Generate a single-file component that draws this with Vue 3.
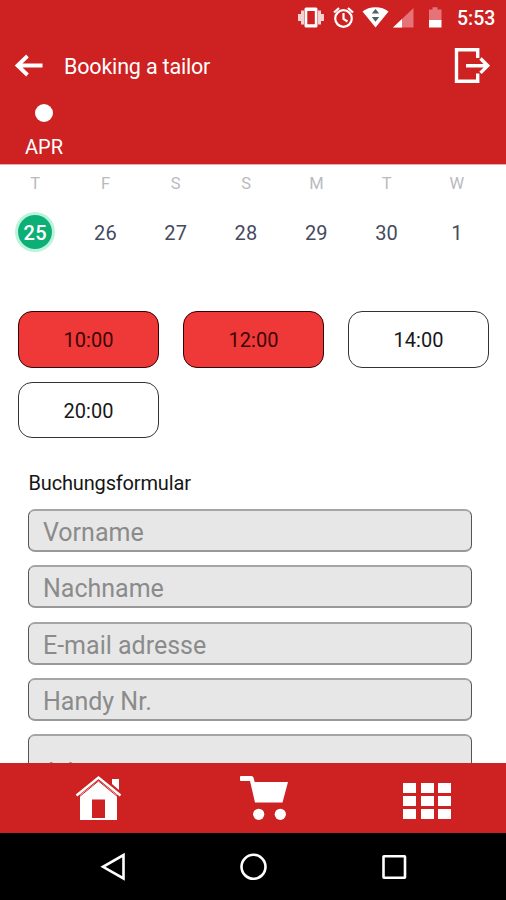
<script setup>
const days = [
  { letter: 'T', date: 25, selected: true },
  { letter: 'F', date: 26 },
  { letter: 'S', date: 27 },
  { letter: 'S', date: 28 },
  { letter: 'M', date: 29 },
  { letter: 'T', date: 30 },
  { letter: 'W', date: 1 },
]
const slots = [
  { time: '10:00', taken: true },
  { time: '12:00', taken: true },
  { time: '14:00', taken: false },
  { time: '20:00', taken: false },
]
const fields = ['Vorname', 'Nachname', 'E-mail adresse', 'Handy Nr.']
</script>

<template>
  <div class="screen">
    <header class="top">
      <div class="status">
        <svg class="status-icons" width="150" height="36" viewBox="294 0 150 36">
          <g fill="#fff">
            <path fill-rule="evenodd" d="M306 7.500h10q1.500 0 1.500 1.500v17q0 1.500-1.500 1.500h-10q-1.500 0-1.500-1.500v-17q0-1.500 1.500-1.500zM307.300 11v13.200h7.500v-13.200z" />
            <path d="M301 10.500h3v14h-3zM298 14h3v7h-3zM318 10.500h3v14h-3zM321 14h3v7h-3z" opacity=".8" />
            <path d="M362.500 11.500C369 5.800 382 5.800 388.500 11.500L375.500 27.500z" />
          </g>
          <path d="M371.800 13.500l3.700-4.500 3.700 4.500zM371.800 17h7.400l-3.700 4.800z" fill="#52605f" />
          <g fill="none" stroke="#fff" stroke-width="2.200">
            <circle cx="343.500" cy="18.500" r="8.300" />
            <path d="M343.500 13v6l4 2.500M334 12.500l5-4.500M353 12.500l-5-4.500" />
          </g>
          <path d="M393 27.500L413.500 8v19.500z" fill="#e57377" />
          <path d="M393 27.500L402 19v8.500z" fill="#fff" />
          <path d="M429 9.500h3.500v-2.200h5v2.200h4v11h-12.500z" fill="#e57377" />
          <path d="M429 20h12.500v7.500h-12.500z" fill="#fff" />
        </svg>
        <span class="clock">5:53</span>
      </div>
      <div class="bar">
        <svg class="back" width="30" height="24" viewBox="14 54 30 24" fill="none" stroke="#fff" stroke-width="3.800">
          <path d="M42.500 65.500H17.500M27.500 56l-10 9.500 10 9.500" />
        </svg>
        <h1>Booking a tailor</h1>
        <svg width="36" height="38" viewBox="454 47 36 38" fill="none" stroke="#fff" stroke-width="3.400">
          <path d="M477.700 58v-8.300h-21.200v31.600h21.200V73.500M466 65.700h21M480.500 58.500l7.200 7.200-7.200 7.200" />
        </svg>
      </div>
      <div class="month">
        <i class="dot"></i>
        <span>APR</span>
      </div>
    </header>

    <main class="content">
      <section class="week">
        <div v-for="(day, i) in days" :key="i" class="day">
          <span class="letter">{{ day.letter }}</span>
          <span class="date" :class="{ selected: day.selected }">{{ day.date }}</span>
        </div>
      </section>
      <section class="slots">
        <button v-for="slot in slots" :key="slot.time" class="slot" :class="{ taken: slot.taken }">{{ slot.time }}</button>
      </section>
      <section class="form">
        <h2>Buchungsformular</h2>
        <div v-for="field in fields" :key="field" class="field">{{ field }}</div>
        <div class="field address">Adresse</div>
      </section>
    </main>

    <nav class="tabs">
      <svg width="48" height="46" viewBox="75 775 48 46">
        <path d="M112 779h7v11l-7-6z" fill="#fff" />
        <path d="M80 795L98.500 780.500 117 795V820H80z" fill="#fff" />
        <path d="M76.500 795.500L98.500 777.500 120.500 795.500" fill="none" stroke="#fff" stroke-width="2.400" />
        <path d="M79 797L98.500 781 118 797" fill="none" stroke="#cd2122" stroke-width="1" />
        <path d="M92 799.500h13V818H92z" fill="#cd2122" />
      </svg>
      <svg width="50" height="46" viewBox="238 775 50 46" fill="#fff">
        <path d="M241 776h10.500q1.500 0 2 1.500l1.200 4.500h33.300l-5.500 20.500h-27.500l-5-21.500h-9q-1 0-1-1v-3q0-1 1-1z" />
        <circle cx="258.700" cy="814.300" r="5.600" />
        <circle cx="280.300" cy="814.300" r="5.600" />
      </svg>
      <div class="grid"><i v-for="n in 9" :key="n"></i></div>
    </nav>
    <footer class="system">
      <svg width="28" height="30" viewBox="100 852 28 30" fill="none" stroke="#fff" stroke-width="2.600">
        <path d="M123.500 855v23.500L103 866.800z" />
      </svg>
      <svg width="30" height="30" viewBox="239 852 30 30" fill="none" stroke="#fff" stroke-width="2.600">
        <circle cx="253.500" cy="866.800" r="12" />
      </svg>
      <svg width="28" height="30" viewBox="380 852 28 30" fill="none" stroke="#fff" stroke-width="2.600">
        <rect x="383.500" y="856.200" width="21.500" height="21.500" rx=".5" />
      </svg>
    </footer>
  </div>
</template>

<style>
body { margin: 0; background: #fff; }
</style>

<style scoped>
* { box-sizing: border-box; }
svg { display: block; flex: none; }
.screen { width: 506px; height: 900px; display: flex; flex-direction: column; overflow: hidden; background: #fff; font-family: Roboto, sans-serif; }
.top { flex: none; height: 165px; background: #cd2122; color: #fff; border-bottom: 1px solid #f0a9a9; }
.status { height: 36px; display: flex; align-items: center; padding-left: 294px; }
.clock { margin-left: 13px; font-size: 19.500px; font-weight: 500; }
.bar { height: 60px; display: flex; align-items: center; padding: 0 16px 0 14px; }
h1 { flex: 1; margin: 0 0 0 20px; font-size: 21.500px; font-weight: 400; letter-spacing: -.18px; }
.month { width: 88px; padding-top: 8px; display: flex; flex-direction: column; align-items: center; font-size: 20px; }
.dot { width: 18px; height: 18px; border-radius: 50%; background: #fff; }
.month span { margin-top: 13px; line-height: 24px; }
.content { flex: 1; min-height: 0; overflow: hidden; }
.week { display: grid; grid-template-columns: repeat(7, 70.300px); height: 146px; padding-top: 8px; }
.day { display: flex; flex-direction: column; align-items: center; }
.letter { font-size: 16.500px; line-height: 22px; color: #b9babd; }
.date { width: 34px; height: 34px; margin-top: 20px; border-radius: 50%; font-size: 20px; line-height: 36px; text-align: center; letter-spacing: .2px; color: #464a5c; }
.selected { background: #0caf75; box-shadow: 0 0 0 3px #bdf3dd; color: #fff; font-weight: 500; }
.slots { display: grid; grid-template-columns: repeat(3, 141px); gap: 14px 24px; padding-left: 18px; }
.slot { height: 56.500px; padding: 2px 0 0; border: 1px solid #333; border-radius: 14px; background: #fff; color: #181818; font: 400 20px Roboto, sans-serif; }
.taken { background: #ef3939; border-color: #300; color: #3c0505; }
.form { padding: 33px 34px 0 28px; }
h2 { margin: 0 0 14px .5px; font-size: 20px; line-height: 24px; font-weight: 400; letter-spacing: -.16px; color: #151515; }
.field { height: 43px; margin-bottom: 13.300px; padding-left: 14px; border: 1px solid #555; border-top: 2px solid #a5a5a5; border-bottom: 2px solid #999; border-radius: 7px; background: #e7e7e7; color: #8b8b8b; font-size: 25px; line-height: 43px; }
.address { height: 90px; padding-top: 15px; }
.tabs { flex: none; height: 70px; display: flex; padding: 12px 55px 0 75px; justify-content: space-between; background: #cd2122; }
.grid { display: grid; grid-template-columns: repeat(3, 13px); grid-auto-rows: 10px; gap: 3px 4.500px; padding-top: 8px; }
.grid i { background: #fff; }
.system { flex: none; height: 67px; display: flex; justify-content: space-between; padding: 19px 98px 0 100px; background: #000; }
</style>
